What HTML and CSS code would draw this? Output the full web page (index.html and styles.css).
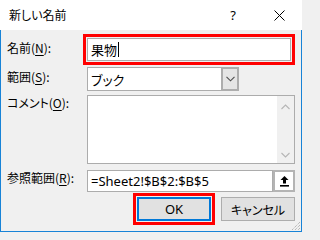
FILE: index.html
```html
<!DOCTYPE html>
<html lang="ja">
<head>
<meta charset="utf-8">
<title>新しい名前</title>
<link rel="stylesheet" href="styles.css">
</head>
<body>
<div class="window">
  <div class="titlebar">
    <span class="title">新しい名前</span>
    <span class="tb-btn help">?</span>
    <span class="tb-btn close">
      <svg width="11" height="11" viewBox="0 0 11 11"><path d="M0.5 0.5 L10.5 10.5 M10.5 0.5 L0.5 10.5" stroke="#000" stroke-width="1" fill="none"/></svg>
    </span>
  </div>
  <div class="body">
    <div class="row row-name">
      <label class="lbl">名前(<u>N</u>):</label>
      <div class="focus-ring">
        <div class="field"><span class="val">果物</span><span class="caret"></span></div>
      </div>
    </div>
    <div class="row row-scope">
      <label class="lbl">範囲(<u>S</u>):</label>
      <div class="combo">
        <span class="combo-text">ブック</span>
        <span class="combo-btn">
          <svg width="9" height="6" viewBox="0 0 9 6"><path d="M0.5 0.8 L4.5 4.8 L8.5 0.8" stroke="#4d4d4d" stroke-width="1.1" fill="none"/></svg>
        </span>
      </div>
    </div>
    <div class="row row-memo">
      <label class="lbl">コメント(<u>O</u>):</label>
      <div class="memo">
        <div class="memo-text"></div>
        <div class="sbar">
          <span class="sb-arrow up"><svg width="9" height="6" viewBox="0 0 9 6"><path d="M0.5 5 L4.5 1 L8.5 5" stroke="#b5b5b5" stroke-width="1.1" fill="none"/></svg></span>
          <span class="sb-arrow down"><svg width="9" height="6" viewBox="0 0 9 6"><path d="M0.5 1 L4.5 5 L8.5 1" stroke="#b5b5b5" stroke-width="1.1" fill="none"/></svg></span>
        </div>
      </div>
    </div>
    <div class="row row-ref">
      <label class="lbl">参照範囲(<u>R</u>):</label>
      <div class="ref">
        <div class="ref-field">=Sheet2!$B$2:$B$5</div>
        <div class="ref-btn">
          <svg width="9" height="11" viewBox="0 0 9 11"><path d="M4.5 0 L8.5 4 L6 4 L6 7.5 L3 7.5 L3 4 L0.5 4 Z" fill="#000"/><rect x="0" y="9" width="9" height="1.6" fill="#000"/></svg>
        </div>
      </div>
    </div>
    <div class="actions">
      <div class="ok-ring"><button class="btn ok">OK</button></div>
      <button class="btn cancel">キャンセル</button>
    </div>
    <span class="grip">
      <svg width="10" height="10" viewBox="0 0 10 10"><path d="M9 1 L1 9 M9 4 L4 9 M9 7 L7 9" stroke="#a0a0a0" stroke-width="1" stroke-dasharray="1 1" fill="none"/></svg>
    </span>
  </div>
</div>
</body>
</html>
```
FILE: styles.css
```css
* { box-sizing: border-box; }
html, body { margin: 0; padding: 0; }
body {
  font-family: "Noto Sans CJK JP", "Noto Sans", sans-serif;
  font-size: 12px;
  color: #000;
  background: #f0f0f0;
  font-feature-settings: "palt";
}
.window {
  width: 302px;
  height: 232px;
  display: flex;
  flex-direction: column;
}
.titlebar {
  height: 30px;
  background: #fff;
  display: flex;
  align-items: center;
  flex: none;
}
.title {
  padding-left: 9px;
  flex: 1;
  line-height: 16px;
}
.tb-btn {
  width: 46px;
  height: 30px;
  display: flex;
  align-items: center;
  justify-content: center;
}
.help {
  font-family: "Noto Sans", sans-serif;
  font-size: 13px;
}
.body {
  position: relative;
  flex: 1;
  background: #f0f0f0;
  border: 1px solid #1883d7;
  border-top: none;
  padding: 4px 6px 0 6px;
  display: flex;
  flex-direction: column;
}
.row { display: flex; align-items: flex-start; }
.lbl {
  width: 80px;
  flex: none;
  line-height: 16px;
}
.lbl u { text-decoration-thickness: 1px; text-underline-offset: 2px; }

.row-name { height: 31px; }
.row-name .lbl { padding-top: 6px; }
.focus-ring {
  margin-left: -4px;
  width: 216px;
  height: 31px;
  border: 3px solid #ff0000;
  padding: 1px;
}
.field {
  height: 23px;
  background: #fff;
  border: 1px solid #acacac;
  padding-left: 3px;
  display: flex;
  align-items: center;
  font-size: 13px;
}
.caret {
  width: 1px;
  height: 15px;
  background: #000;
  margin-left: 1px;
}

.row-scope { margin-top: 2px; height: 24px; }
.row-scope .lbl { padding-top: 2px; }
.combo {
  width: 152px;
  height: 24px;
  display: flex;
}
.combo-text {
  flex: 1;
  background: #fff;
  border: 1px solid #acacac;
  border-right: none;
  padding-left: 3px;
  display: flex;
  align-items: center;
  font-size: 13px;
}
.combo-btn {
  width: 18px;
  background: #e5e5e5;
  border: 2px solid #adadad;
  display: flex;
  align-items: center;
  justify-content: center;
}

.row-memo { margin-top: 4px; height: 69px; }
.row-memo .lbl { padding-top: 0; }
.memo {
  width: 208px;
  height: 69px;
  background: #fff;
  border: 1px solid #acacac;
  display: flex;
}
.memo-text { flex: 1; }
.sbar {
  width: 17px;
  background: #f0f0f0;
  display: flex;
  flex-direction: column;
  justify-content: space-between;
  align-items: center;
  padding: 8px 0 5px;
}
.sb-arrow { display: flex; height: 6px; }

.row-ref { margin-top: 6px; height: 22px; }
.row-ref .lbl { padding-top: 0; }
.ref {
  width: 208px;
  height: 22px;
  display: flex;
}
.ref-field {
  flex: 1;
  background: #fff;
  border: 1px solid #acacac;
  padding-left: 3px;
  display: flex;
  align-items: center;
  font-family: "Noto Sans", sans-serif;
  font-size: 13px;
}
.ref-btn {
  width: 22px;
  background: #fff;
  border: 2px solid #b4b4b4;
  display: flex;
  align-items: center;
  justify-content: center;
}

.actions {
  margin-top: 1px;
  display: flex;
  justify-content: flex-end;
  align-items: center;
  gap: 6px;
}
.ok-ring {
  border: 3px solid #ff0000;
  padding: 1px;
}
.btn {
  width: 74px;
  height: 24px;
  margin: 0;
  padding: 0;
  background: #e1e1e1;
  border: 1px solid #adadad;
  font-family: "Noto Sans CJK JP", "Noto Sans", sans-serif;
  font-feature-settings: "palt";
  font-size: 12px;
  color: #000;
  display: block;
}
.btn.ok {
  border: 2px solid #0078d7;
  font-family: "Noto Sans", sans-serif;
  font-size: 13px;
}
.grip {
  position: absolute;
  right: 0;
  bottom: 0;
  display: flex;
}
```
